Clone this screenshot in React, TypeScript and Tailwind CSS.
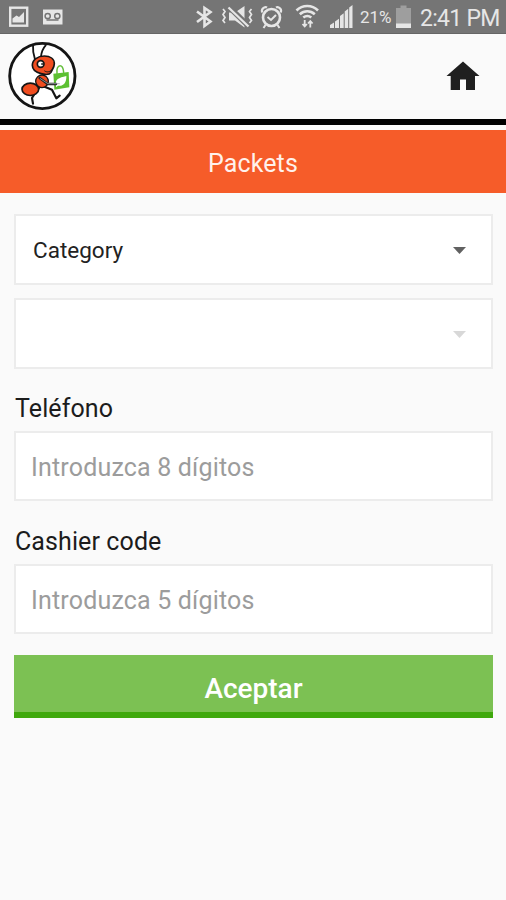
import { useState } from 'react';
import type { ReactNode } from 'react';

function StatusBar() {
  return (
    <div className="flex h-[34px] items-center justify-between border-b border-[#666666] bg-[#757575] text-[#e6e6e6]">
      <svg className="h-[33px] w-[70px]" viewBox="0 0 70 33" fill="none">
        <rect x="10.2" y="7.7" width="17" height="18" stroke="#e6e6e6" strokeWidth="2.4" />
        <path d="M12.5 22.5v-4l4-3 2.5 1.5 5-5v10.5z" fill="#e6e6e6" />
        <rect x="43" y="9.5" width="19.5" height="15" fill="#e6e6e6" />
        <circle cx="47.7" cy="16" r="2.6" stroke="#757575" strokeWidth="1.5" />
        <circle cx="57.3" cy="16" r="2.6" stroke="#757575" strokeWidth="1.5" />
        <path d="M46.5 20h12" stroke="#757575" strokeWidth="1.5" />
      </svg>
      <div className="flex items-center">
        <svg className="h-[33px] w-[171px]" viewBox="185 0 171 33" fill="none">
          {/* bluetooth */}
          <path d="M197 11.500l13.500 10L204.500 26V8l6 4L197 22" stroke="#e6e6e6" strokeWidth="2.6" />
          {/* vibrate / muted */}
          <path d="M229 12.500h6l9.500-6.500v21.500l-9.500-7h-6z" fill="#e6e6e6" />
          <path d="M228 6l21 20.500" stroke="#757575" strokeWidth="5.500" />
          <path d="M228.500 7.500l20 19" stroke="#e6e6e6" strokeWidth="2.300" />
          <path d="M223 9l2 2.500-2 3 2 3-2 3 2 2.500M251.500 9l-2 2.500 2 3-2 3 2 3-2 2.500" stroke="#e6e6e6" strokeWidth="1.700" />
          {/* alarm */}
          <circle cx="271.500" cy="17.500" r="8.500" stroke="#e6e6e6" strokeWidth="2.600" />
          <path d="M267.500 17l3.500 3 5-5M265.500 25l-2 3M277.500 25l2 3" stroke="#e6e6e6" strokeWidth="2" />
          <path d="M262.500 12.500c-2-3 2-6.500 4.500-5M280.500 12.500c2-3-2-6.500-4.500-5" stroke="#e6e6e6" strokeWidth="2.200" />
          {/* wifi */}
          <path d="M296.500 10.500c6-6 15.500-6 21.500 0M299.800 14.200c4.500-4 10.500-4 15 0M303.300 17.600c2.500-2 5.500-2 8 0" stroke="#e6e6e6" strokeWidth="2.600" />
          <path d="M304.700 20v6.500M302.500 24l2.200 2.500 2.200-2.500M310.300 27.500V21M308 23.500l2.300-2.500 2.300 2.500" stroke="#e6e6e6" strokeWidth="1.800" />
          {/* signal */}
          <path d="M330 28v-3l4-2.500V28zM335 28v-6.500l4-2.700V28zM340 28V16l3.700-2.700V28zM344.700 28V11.500l3.500-2.700V28zM349.200 28V7.500l3.300-2.500v23z" fill="#e6e6e6" />
        </svg>
        <span className="ml-[4px] mt-[2px] w-[36px] whitespace-nowrap text-[17px] leading-none">21%</span>
        <svg className="h-[33px] w-[15px]" viewBox="0 0 15 33">
          <path d="M0 8h4.500V5.500h6V8H15v20H0z" fill="#9e9e9e" />
          <path d="M0 23.500h15V28H0z" fill="#e6e6e6" />
        </svg>
        <span className="ml-[9px] mt-[3px] w-[86px] whitespace-nowrap text-[23px] leading-none tracking-[-0.7px]">2:41 PM</span>
      </div>
    </div>
  );
}

function AntLogo() {
  return (
    <svg className="h-[70px] w-[70px]" viewBox="21 21 210 210" fill="none" strokeLinecap="round" strokeLinejoin="round">
      <circle cx="127" cy="126" r="98" fill="#ffffff" stroke="#151515" strokeWidth="8.500" />
      <path d="M99 32c-1 16 1 30 6 44M137 34c-9 10-13 22-14 34" stroke="#151515" strokeWidth="5.500" />
      <path d="M130 157l26 10 13 26 10-8M120 158l-18 24-6 10 3 17" stroke="#151515" strokeWidth="6.500" />
      <ellipse cx="91" cy="166" rx="25" ry="18.500" fill="#f04d20" stroke="#151515" strokeWidth="5" />
      <ellipse cx="126" cy="142" rx="19" ry="19" fill="#f04d20" stroke="#151515" strokeWidth="4" />
      <path d="M97 94c0-17 16-28 36-28 18 0 30 9 30 23 0 12-8 19-10 26-5 8-19 7-30 4-16-4-26-12-26-25z" fill="#f04d20" stroke="#151515" strokeWidth="5" />
      <path d="M134 111c7 5 15 3 21-3" stroke="#151515" strokeWidth="3" />
      <circle cx="122" cy="90" r="10" fill="#ffffff" stroke="#151515" strokeWidth="5" />
      <path d="M125 90h4" stroke="#151515" strokeWidth="4" />
      <path d="M171 118c-2-14 3-23 9-23s10 8 11 20" stroke="#64be3c" strokeWidth="4.500" />
      <path d="M160 119l46-5 2 46-45 7z" fill="#5cc032" />
      <path d="M168 151c-3-14 8-20 31-25 1 20-9 32-25 29l-6 5" fill="#ffffff" />
      <path d="M119 132l24 18h25" stroke="#222222" strokeWidth="7.500" />
      <path d="M121 134l23 15h34" stroke="#9aa3a5" strokeWidth="2.500" />
    </svg>
  );
}

function Header() {
  return (
    <header className="flex h-[91px] items-start justify-between border-b-[6px] border-black bg-[#fafafa] pl-[7px] pr-[26px] pt-[7px]">
      <AntLogo />
      <button className="mt-[20px]" aria-label="Home">
        <svg className="h-[30px] w-[34px]" viewBox="0 0 34 30">
          <path d="M17 .500L33.500 15H29v14H20V18.500h-6V29H4.700V15H.500z" fill="#1f1f1f" />
        </svg>
      </button>
    </header>
  );
}

function SelectBox({ children, disabled }: { children?: ReactNode; disabled?: boolean }) {
  return (
    <button
      disabled={disabled}
      className="flex h-[71px] w-full items-center justify-between border-2 border-[#ececec] bg-white pl-[17px] pr-[25px] pt-[2px] text-left text-[22.5px] text-[#222222]"
    >
      <span className="pt-px">{children}</span>
      <svg className={disabled ? 'h-[7px] w-[13px] text-[#d8d8d8]' : 'h-[7px] w-[13px] text-[#616161]'} viewBox="0 0 13 7">
        <path d="M0 0h13L6.500 7z" fill="currentColor" />
      </svg>
    </button>
  );
}

interface FieldProps {
  label: string;
  placeholder: string;
  value: string;
  onChange: (value: string) => void;
}

function Field({ label, placeholder, value, onChange }: FieldProps) {
  return (
    <label className="block">
      <span className="block h-[38px] pl-px pt-px text-[25px] leading-[30px] tracking-[0.1px] text-[#1c1c1c]">{label}</span>
      <input
        className="block h-[70px] w-full border-2 border-[#ececec] bg-white px-[15px] pt-[2px] text-[25px] tracking-[0.18px] text-[#222222] outline-none placeholder:text-[#9c9c9c]"
        placeholder={placeholder}
        value={value}
        onChange={(e) => onChange(e.target.value)}
      />
    </label>
  );
}

function App() {
  const [phone, setPhone] = useState('');
  const [cashierCode, setCashierCode] = useState('');

  return (
    <div className="flex h-[900px] w-[506px] flex-col overflow-hidden bg-[#fafafa] font-['Roboto',sans-serif]">
      <StatusBar />
      <Header />
      <h1 className="mt-[5px] flex h-[63px] items-center justify-center bg-[#f65c29] pt-[4px] text-[25px] tracking-[0.1px] text-[#fff1ec]">
        Packets
      </h1>
      <main className="flex flex-col pl-[14px] pr-[13px] pt-[21px]">
        <SelectBox>Category</SelectBox>
        <div className="mt-[13px]">
          <SelectBox disabled />
        </div>
        <div className="mt-[24px]">
          <Field label="Teléfono" placeholder="Introduzca 8 dígitos" value={phone} onChange={setPhone} />
        </div>
        <div className="mt-[25px]">
          <Field label="Cashier code" placeholder="Introduzca 5 dígitos" value={cashierCode} onChange={setCashierCode} />
        </div>
        <button className="mt-[21px] h-[63px] border-b-[6px] border-[#3fa80d] bg-[#7cc153] pt-[11px] text-[28px] font-medium leading-none text-white">
          Aceptar
        </button>
      </main>
    </div>
  );
}

export default App;
